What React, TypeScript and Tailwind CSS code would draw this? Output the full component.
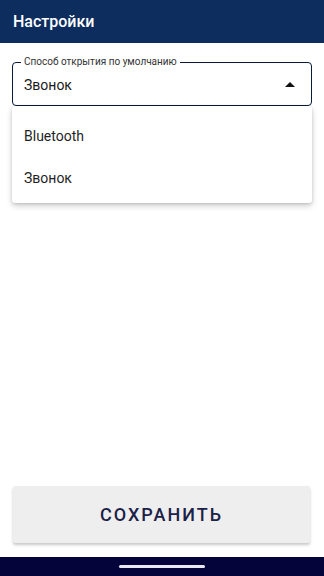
import React from "react";

export default function App() {
  return (
    <div
      className="w-[324px] h-[576px] bg-white flex flex-col relative overflow-hidden"
      style={{ fontFamily: "Roboto, 'Noto Sans', sans-serif" }}
    >
      <div className="h-[43px] bg-[#0c2d5e] flex items-center px-[13px] shrink-0">
        <span className="text-white text-[16px] font-medium">Настройки</span>
      </div>
      <div className="flex-1 flex flex-col px-[12px] pt-[19px]">
        <div className="relative h-[44px] border-[1.5px] border-[#0a1a3a] rounded-[4px] flex items-center pl-[11px] pr-[16px]">
          <span className="absolute -top-[7px] left-[8px] bg-white px-[3px] text-[10px] leading-[12px] text-[#333]">
            Способ открытия по умолчанию
          </span>
          <span className="flex-1 text-[14px] text-[#1a1a1a] pt-[2px]">Звонок</span>
          <svg width="10" height="6" viewBox="0 0 10 6" className="mt-[2px]">
            <path d="M0 5 L5 0 L10 5 Z" fill="#111" />
          </svg>
        </div>
        <div className="relative z-10 h-[97px] bg-white rounded-[3px] shadow-[0_3px_6px_rgba(0,0,0,0.18),0_1px_3px_rgba(0,0,0,0.12)] flex flex-col pt-[9px]">
          <div className="h-[42px] flex items-center pl-[12px] text-[14px] text-[#1f1f1f]">Bluetooth</div>
          <div className="h-[42px] flex items-center pl-[12px] text-[14px] text-[#1f1f1f]">Звонок</div>
        </div>
        <div className="flex-1" />
        <div className="ml-[1px] mr-[2px] h-[57px] bg-[#eeeeee] rounded-[2px] shadow-[0_2px_3px_rgba(0,0,0,0.22)] flex items-center justify-center mb-[14px]">
          <span className="text-[18px] font-medium tracking-[2px] text-[#1b2147]">СОХРАНИТЬ</span>
        </div>
      </div>
      <div className="h-[19px] bg-[#04043a] flex items-center justify-center shrink-0">
        <div className="w-[86px] h-[3px] rounded-full bg-[#e8e8f0]" />
      </div>
    </div>
  );
}
